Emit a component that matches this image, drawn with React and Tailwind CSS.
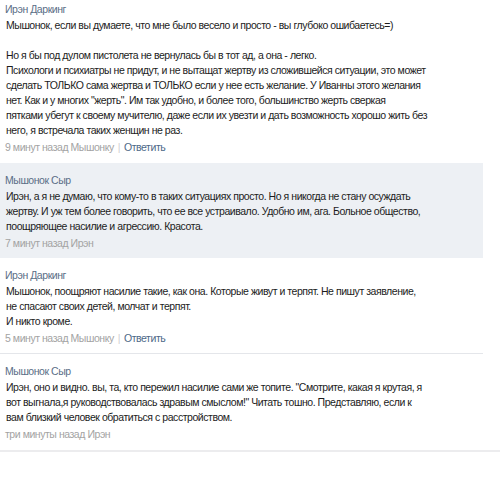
import React from "react";

const comments = [
  {
    name: "Ирэн Даркинг",
    lines: [
      "Мышонок, если вы думаете, что мне было весело и просто - вы глубоко ошибаетесь=)",
      "",
      "Но я бы под дулом пистолета не вернулась бы в тот ад, а она - легко.",
      "Психологи и психиатры не придут, и не вытащат жертву из сложившейся ситуации, это может",
      "сделать ТОЛЬКО сама жертва и ТОЛЬКО если у нее есть желание. У Иванны этого желания",
      "нет. Как и у многих \"жерть\". Им так удобно, и более того, большинство жерть сверкая",
      "пятками убегут к своему мучителю, даже если их увезти и дать возможность хорошо жить без",
      "него, я встречала таких женщин не раз.",
    ],
    time: "9 минут назад Мышонку",
    reply: true,
    first: true,
  },
  {
    name: "Мышонок Сыр",
    lines: [
      "Ирэн, а я не думаю, что кому-то в таких ситуациях просто. Но я никогда не стану осуждать",
      "жертву. И уж тем более говорить, что ее все устраивало. Удобно им, ага. Больное общество,",
      "поощряющее насилие и агрессию. Красота.",
    ],
    time: "7 минут назад Ирэн",
    reply: false,
    hl: true,
  },
  {
    name: "Ирэн Даркинг",
    lines: [
      "Мышонок, поощряют насилие такие, как она. Которые живут и терпят. Не пишут заявление,",
      "не спасают своих детей, молчат и терпят.",
      "И никто кроме.",
    ],
    time: "5 минут назад Мышонку",
    reply: true,
    border: true,
  },
  {
    name: "Мышонок Сыр",
    lines: [
      "Ирэн, оно и видно. вы, та, кто пережил насилие сами же топите. \"Смотрите, какая я крутая, я",
      "вот выгнала,я руководствовалась здравым смыслом!\" Читать тошно. Представляю, если к",
      "вам близкий человек обратиться с расстройством.",
    ],
    time: "три минуты назад Ирэн",
    reply: false,
  },
];

function Comment({ c }) {
  return (
    <div
      className={
        "w-[483px] px-[5px] " +
        (c.first ? "pt-[2px] pb-[8px] " : "pt-[10px] pb-[7px] ") +
        (c.hl ? "bg-[#edf0f4] " : "") +
        (c.border ? "border-b border-[#e4e6ea]" : "")
      }
    >
      <div className="h-[15px] leading-[15px] text-[#5a6e86]">{c.name}</div>
      <div className="mt-[1px] pl-[1px] text-[#1c1c1c]">
        {c.lines.map((l, i) => (
          <div key={i} className="h-[15px] leading-[15px] whitespace-nowrap">
            {l}
          </div>
        ))}
      </div>
      <div className="mt-[2px] h-[15px] leading-[15px] whitespace-nowrap text-[#a3a3a3]">
        {c.time}
        {c.reply && (
          <>
            <span className="mx-[4px] text-[#d0d0d0]">|</span>
            <span className="text-[#4d6987]">Ответить</span>
          </>
        )}
      </div>
    </div>
  );
}

export default function App() {
  return (
    <div
      className="w-[500px] h-[478px] bg-white overflow-hidden text-[10.5px] tracking-[-0.45px]"
      style={{ fontFamily: '"Liberation Sans", Arial, sans-serif' }}
    >
      {comments.map((c, i) => (
        <Comment key={i} c={c} />
      ))}
      <div className="mt-[1px] h-[2px] w-[500px] bg-[#ececee]" />
    </div>
  );
}
